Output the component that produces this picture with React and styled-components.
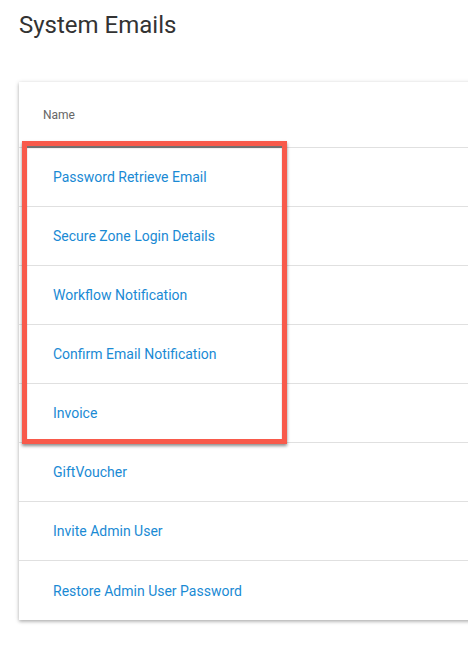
import React from "react";
import styled, { createGlobalStyle } from "styled-components";

const Global = createGlobalStyle`
  html, body { margin: 0; padding: 0; background: #fff; overflow: hidden; }
  body { font-family: Roboto, "Liberation Sans", sans-serif; }
`;

const Page = styled.div`
  position: relative;
  padding: 0 0 0 19px;
  width: 468px;
  height: 658px;
  box-sizing: border-box;
  overflow: hidden;
`;

const Title = styled.h1`
  margin: 0;
  padding-top: 11px;
  height: 82px;
  box-sizing: border-box;
  font-size: 24px;
  font-weight: 400;
  line-height: 28px;
  color: #333;
`;

const Card = styled.div`
  width: 620px;
  background: #fff;
  box-shadow: 0 1px 4px rgba(0, 0, 0, 0.25), 0 2px 3px rgba(0, 0, 0, 0.12);
`;

const HeaderRow = styled.div`
  height: 66px;
  display: flex;
  align-items: center;
  padding-left: 24px;
  font-size: 12px;
  color: #666;
  border-bottom: 1px solid #e0e0e0;
  box-sizing: border-box;
`;

const Row = styled.div`
  height: 59px;
  display: flex;
  align-items: center;
  padding-left: 34px;
  box-sizing: border-box;
  border-bottom: ${(p) => (p.$last ? "none" : "1px solid #e0e0e0")};
`;

const Link = styled.a`
  font-size: 14px;
  color: #1a8ad4;
  text-decoration: none;
`;

const Highlight = styled.div`
  position: absolute;
  left: 22px;
  top: 141px;
  width: 265px;
  height: 303px;
  box-sizing: border-box;
  border: 5px solid #f85a4b;
  box-shadow: 0 2px 3px rgba(0, 0, 0, 0.45), inset 0 2px 1px rgba(0, 0, 0, 0.55);
  pointer-events: none;
`;

const items = [
  "Password Retrieve Email",
  "Secure Zone Login Details",
  "Workflow Notification",
  "Confirm Email Notification",
  "Invoice",
  "GiftVoucher",
  "Invite Admin User",
  "Restore Admin User Password",
];

export default function App() {
  return (
    <>
      <Global />
      <Page>
        <Title>System Emails</Title>
        <Card>
          <HeaderRow>Name</HeaderRow>
          {items.map((t, i) => (
            <Row key={t} $last={i === items.length - 1}>
              <Link href="#">{t}</Link>
            </Row>
          ))}
        </Card>
        <Highlight />
      </Page>
    </>
  );
}
